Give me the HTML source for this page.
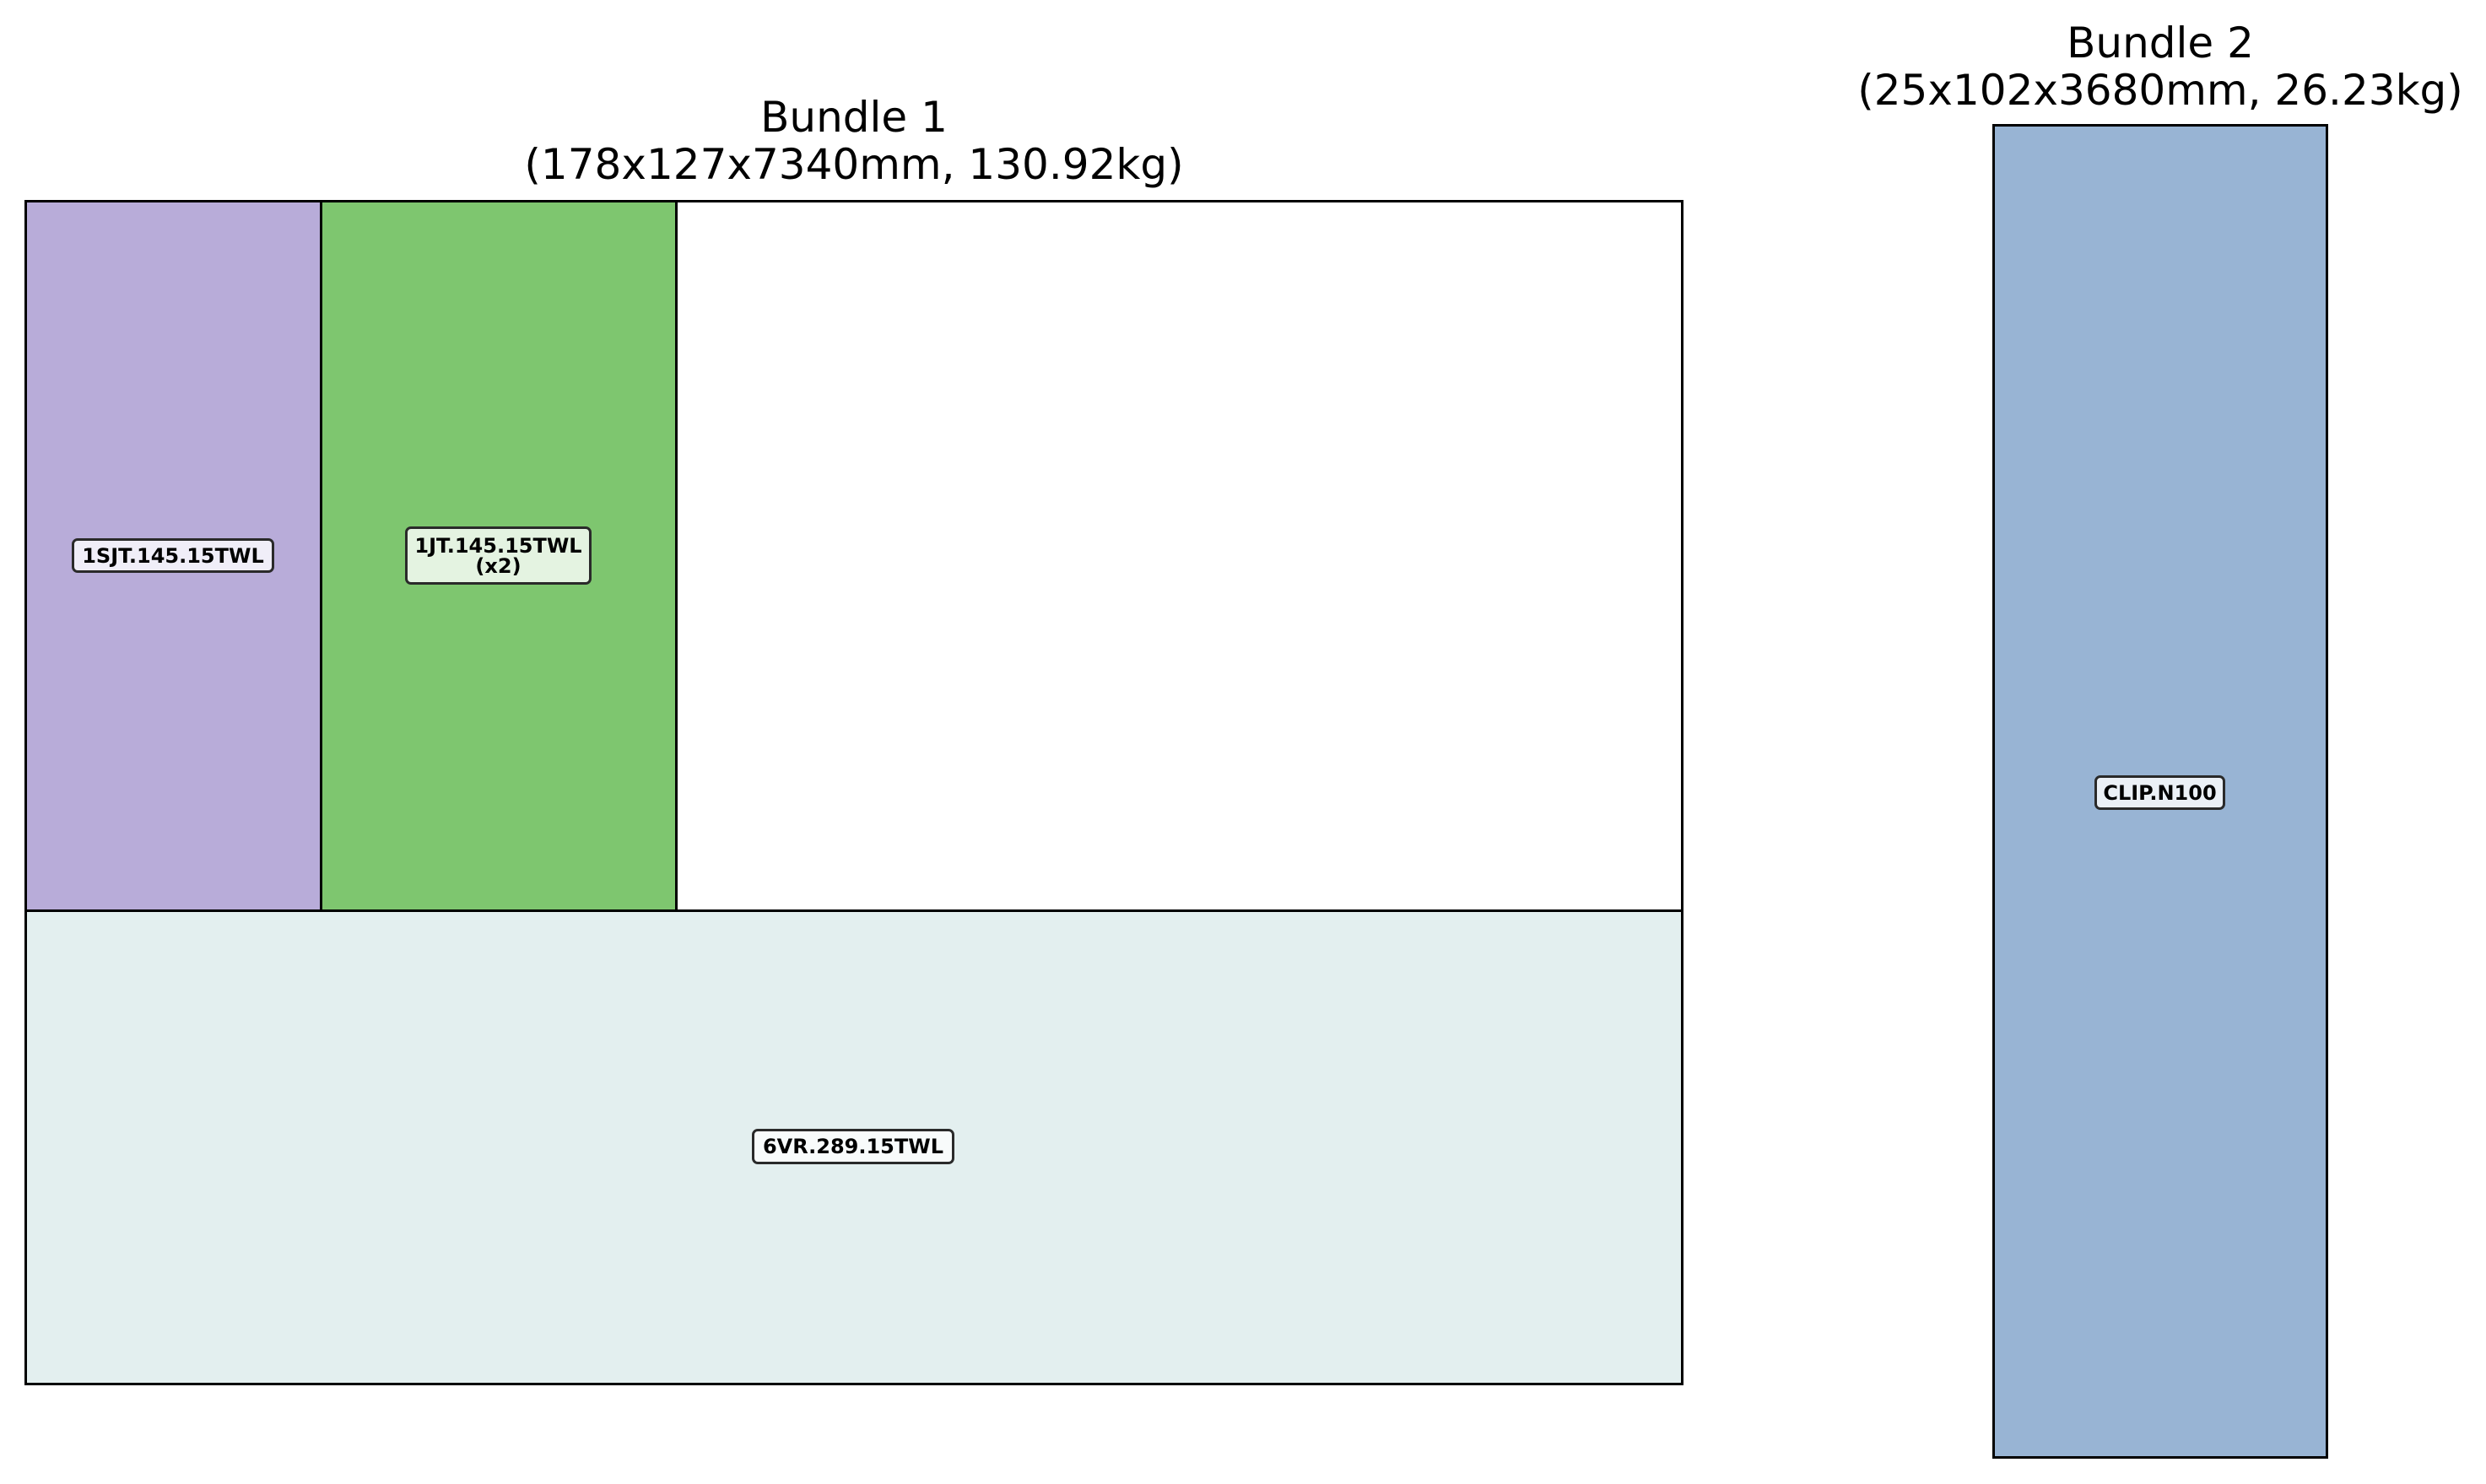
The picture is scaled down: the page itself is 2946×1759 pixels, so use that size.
<!DOCTYPE html>
<html><head><style>
html,body{margin:0;padding:0;background:#fff;}
body{width:2946px;height:1759px;position:relative;overflow:hidden;font-family:"DejaVu Sans","Liberation Sans",sans-serif;}
.r{position:absolute;box-sizing:border-box;border:3px solid #000;}
.t{position:absolute;text-align:center;font-size:50px;line-height:56px;color:#000;white-space:nowrap;transform:translateX(-50%);}
.l{position:absolute;box-sizing:border-box;border:3px solid #2a2a2a;border-radius:7px;font-weight:bold;font-size:24px;line-height:24px;text-align:center;display:flex;align-items:center;justify-content:center;white-space:nowrap;color:#000;}
</style></head><body>
<div class="t" style="left:1012px;top:111px;">Bundle 1<br>(178x127x7340mm, 130.92kg)</div>
<div class="t" style="left:2560px;top:23px;">Bundle 2<br>(25x102x3680mm, 26.23kg)</div>

<div class="r" style="left:29px;top:237px;width:1966px;height:1405px;background:#fff;"></div>
<div class="r" style="left:29px;top:237px;width:353px;height:845px;background:#b8acd9;"></div>
<div class="r" style="left:379px;top:237px;width:424px;height:845px;background:#7ec66f;"></div>
<div class="r" style="left:29px;top:1078px;width:1966px;height:564px;background:#e3efef;"></div>
<div class="r" style="left:2361px;top:147px;width:398px;height:1582px;background:#98b4d4;"></div>

<div class="l" style="left:85px;top:638px;width:240px;height:41px;background:#f0eef8;">1SJT.145.15TWL</div>
<div class="l" style="left:480px;top:624px;width:221px;height:69px;background:#e4f3e1;">1JT.145.15TWL<br>(x2)</div>
<div class="l" style="left:891px;top:1338px;width:240px;height:42px;background:#f8fbfb;">6VR.289.15TWL</div>
<div class="l" style="left:2482px;top:919px;width:155px;height:41px;background:#ebf0f6;">CLIP.N100</div>
</body></html>
